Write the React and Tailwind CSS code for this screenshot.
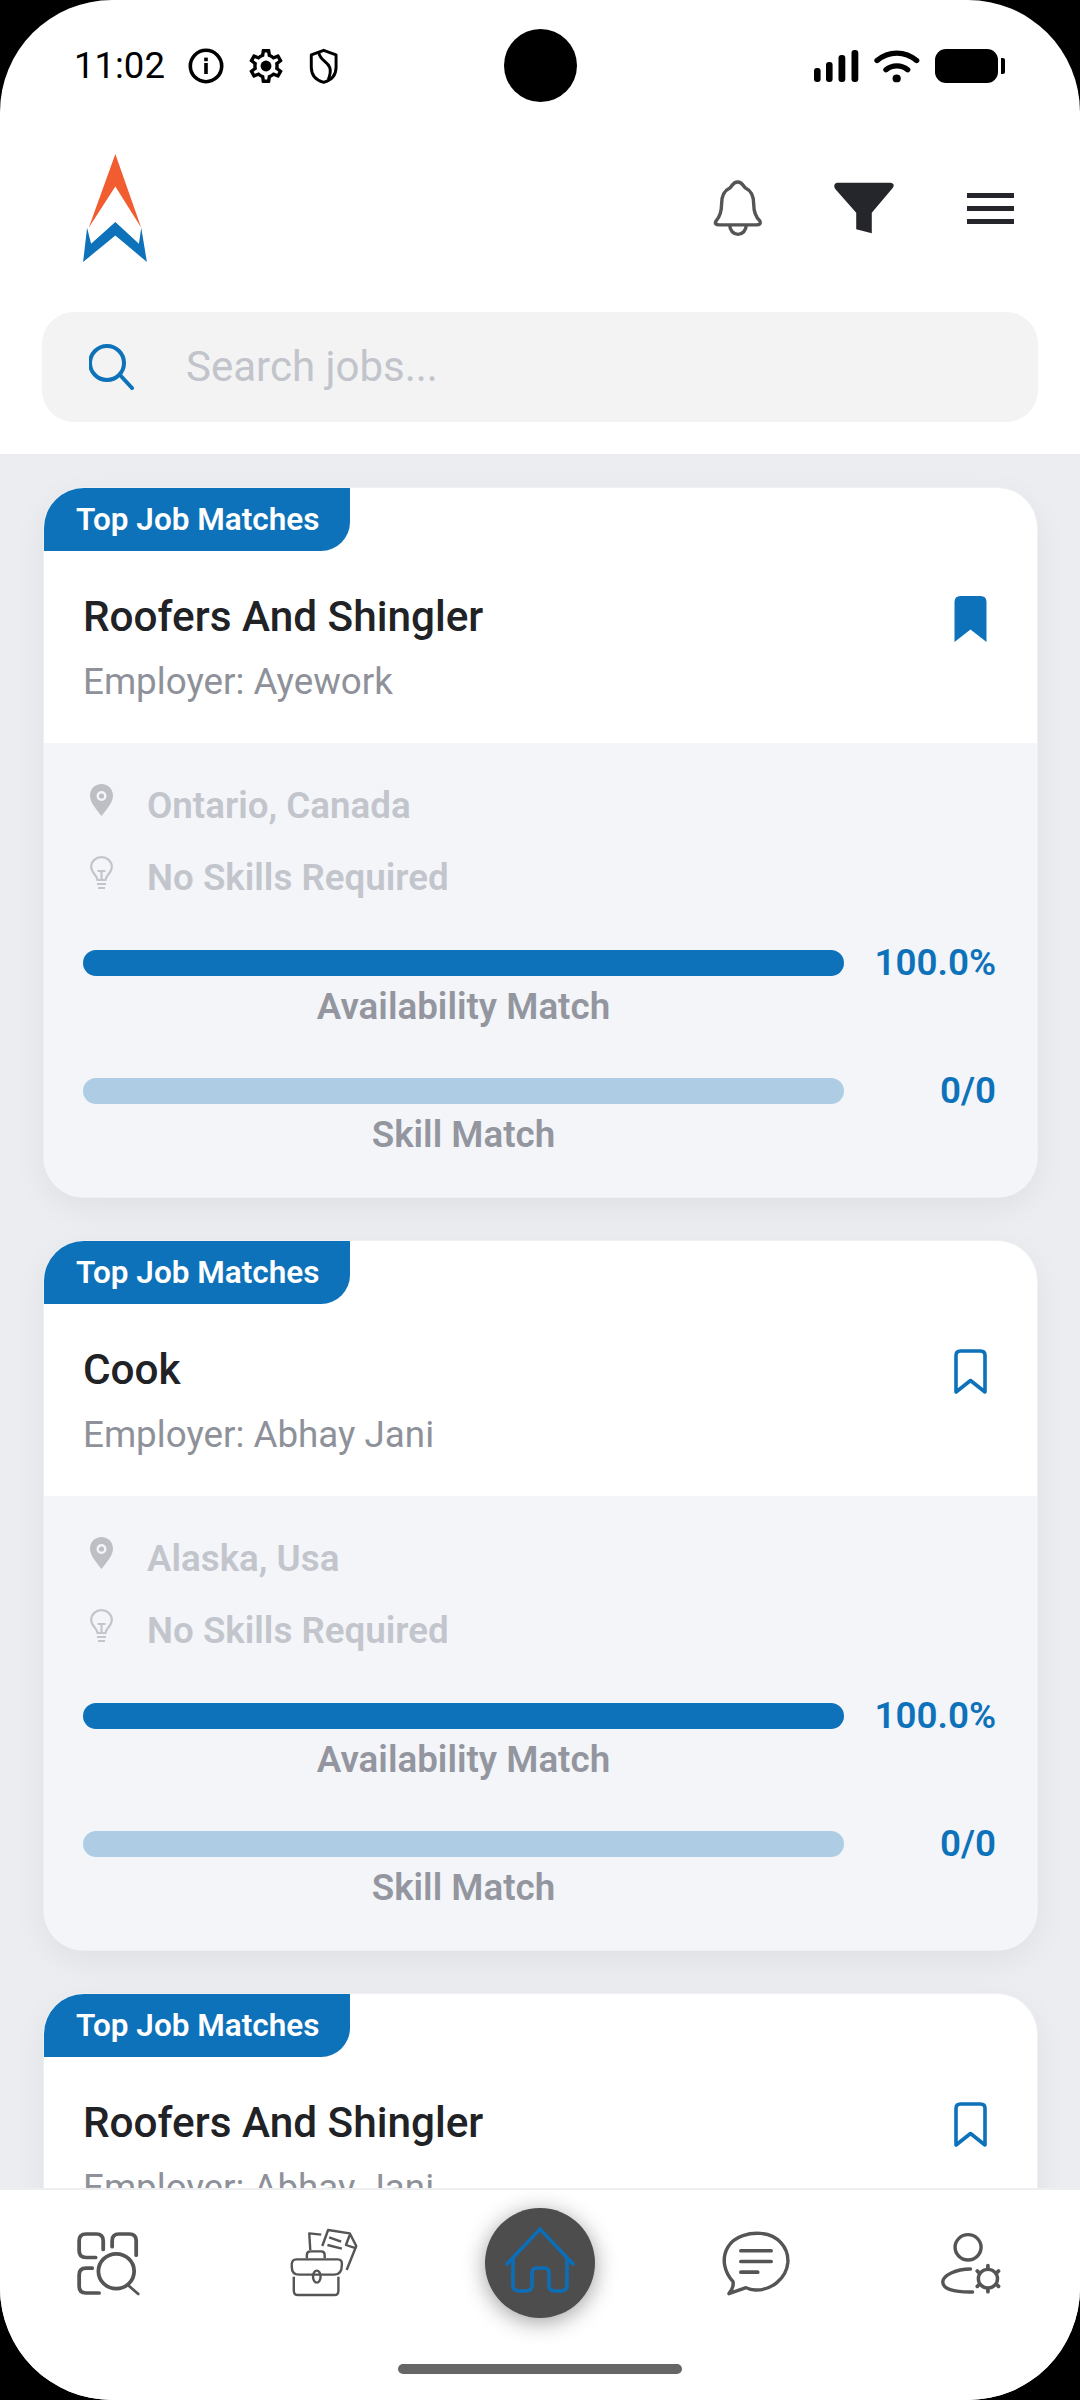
import React from "react";

const jobs = [
  { title: "Roofers And Shingler", employer: "Ayework", place: "Ontario, Canada", saved: true },
  { title: "Cook", employer: "Abhay Jani", place: "Alaska, Usa", saved: false },
  { title: "Roofers And Shingler", employer: "Abhay Jani", place: "Alaska, Usa", saved: false },
];

const gearPath =
  "M19.43 12.98c.04-.32.07-.64.07-.98 0-.34-.03-.66-.07-.98l2.11-1.65c.19-.15.24-.42.12-.64l-2-3.46c-.09-.16-.26-.25-.44-.25-.06 0-.12.01-.17.03l-2.49 1c-.52-.4-1.08-.73-1.69-.98l-.38-2.65C14.46 2.18 14.25 2 14 2h-4c-.25 0-.46.18-.49.42l-.38 2.65c-.61.25-1.17.59-1.69.98l-2.49-1c-.06-.02-.12-.03-.18-.03-.17 0-.34.09-.43.25l-2 3.46c-.13.22-.07.49.12.64l2.11 1.65c-.04.32-.07.65-.07.98 0 .33.03.66.07.98l-2.11 1.65c-.19.15-.24.42-.12.64l2 3.46c.09.16.26.25.44.25.06 0 .12-.01.17-.03l2.49-1c.52.4 1.08.73 1.69.98l.38 2.65c.03.24.24.42.49.42h4c.25 0 .46-.18.49-.42l.38-2.65c.61-.25 1.17-.59 1.69-.98l2.49 1c.06.02.12.03.18.03.17 0 .34-.09.43-.25l2-3.46c.12-.22.07-.49-.12-.64l-2.11-1.65zm-1.98-1.71c.04.31.05.52.05.73 0 .21-.02.43-.05.73l-.14 1.13.89.7 1.08.84-.7 1.21-1.27-.51-1.04-.42-.9.68c-.43.32-.84.56-1.25.73l-1.06.43-.16 1.13-.2 1.35h-1.4l-.19-1.35-.16-1.13-1.06-.43c-.43-.18-.83-.41-1.23-.71l-.91-.7-1.06.43-1.27.51-.7-1.21 1.08-.84.89-.7-.14-1.13c-.03-.31-.05-.54-.05-.74s.02-.43.05-.73l.14-1.13-.89-.7-1.08-.84.7-1.21 1.27.51 1.04.42.9-.68c.43-.32.84-.56 1.25-.73l1.06-.43.16-1.13.2-1.35h1.39l.19 1.35.16 1.13 1.06.43c.43.18.83.41 1.23.71l.91.7 1.06-.43 1.27-.51.7 1.21-1.07.85-.89.7.14 1.13z";

function StatusBar() {
  return (
    <div className="flex h-[132px] shrink-0 items-center pl-[74px] pr-[75px]">
      <span className="text-[36.5px] leading-[42px] text-black">11:02</span>
      {/* info */}
      <svg className="ml-[23px]" width="36" height="36" viewBox="0 0 36 36" fill="none">
        <circle cx="18" cy="18" r="15.7" stroke="#000" strokeWidth="3.6" />
        <rect x="16.2" y="15" width="3.6" height="11" fill="#000" />
        <rect x="16.2" y="9.6" width="3.6" height="3.6" fill="#000" />
      </svg>
      {/* settings */}
      <svg className="ml-[25px]" width="34" height="34" viewBox="2 2 20 20" fill="#000">
        <path d={gearPath} />
        <circle cx="12" cy="12" r="3.2" />
      </svg>
      {/* protection shield */}
      <svg className="ml-[26px]" width="30" height="36" viewBox="893 146 92 110" fill="none" stroke="#000" strokeWidth="9" preserveAspectRatio="none">
        <path d="M938 153 L976 167 V205 C976 230 960 245 938 251 C916 245 900 230 900 205 V167 Z" strokeLinejoin="round" />
        <path d="M923 160 C928 195 975 185 952 243" />
      </svg>

      {/* signal */}
      <svg className="ml-auto" width="45" height="33" viewBox="0 0 45 33" fill="#000">
        <rect x="0" y="18" width="6.6" height="14" rx="3" />
        <rect x="12" y="12" width="6.6" height="20" rx="3" />
        <rect x="24.5" y="5" width="6.8" height="27" rx="3" />
        <rect x="37.5" y="0" width="6.8" height="32" rx="3" />
      </svg>
      {/* wifi */}
      <svg className="ml-[15px]" width="46" height="33" viewBox="972 148 134 100" fill="none" stroke="#000" strokeWidth="16" strokeLinecap="round" preserveAspectRatio="none">
        <path d="M981 180 C1015 150 1062 150 1096 180" />
        <path d="M1007 208 C1025 192 1052 192 1070 208" />
        <circle cx="1038" cy="234" r="12" fill="#000" stroke="none" />
      </svg>
      {/* battery */}
      <div className="ml-[15px] h-[34px] w-[63px] rounded-[11px] bg-black" />
      <div className="ml-[3px] h-[16px] w-[4px] rounded-r-[2px] bg-black" />
    </div>
  );
}

function Header() {
  return (
    <div className="flex h-[152px] shrink-0 items-center pl-[82px] pr-[66px]">
      <svg width="66" height="108" viewBox="238 460 192 325">
        <path d="M335 460 L413 682 L335 558 L255 682 Z" fill="#f15d31" />
        <path d="M238 785 L250 682 L262 730 L335 665 L406 730 L413 682 L430 785 L335 705 Z" fill="#0d72b9" />
      </svg>
      {/* notifications */}
      <svg className="ml-auto" width="53" height="61" viewBox="500 532 155 182" fill="none" stroke="#555" strokeWidth="10" preserveAspectRatio="none">
        <path d="M575 544 C590 544 590 556 598 562 C615 570 622 585 622 610 C622 635 628 648 640 660 Q645 672 630 672 H522 Q505 672 512 660 C522 648 528 635 528 610 C528 585 535 570 552 562 C560 556 560 544 575 544 Z" />
        <path d="M552 674 A24 26 0 0 0 600 674" />
      </svg>
      {/* filter */}
      <svg className="ml-[67px]" width="64" height="54" viewBox="850 540 185 162" fill="#25262b" preserveAspectRatio="none">
        <path d="M864 545 H1020 Q1033 548 1026 560 L965 635 V697 L920 685 V635 L860 565 Q851 550 864 545 Z" />
      </svg>
      {/* menu */}
      <div className="ml-[71px] flex w-[47px] flex-col gap-[8px]">
        <div className="h-[5px] bg-[#25262b]" />
        <div className="h-[5px] bg-[#25262b]" />
        <div className="h-[5px] bg-[#25262b]" />
      </div>
    </div>
  );
}

function SearchBar() {
  return (
    <div className="flex h-[110px] shrink-0 items-center rounded-[32px] bg-[#f3f3f3] pl-[47px]">
      <svg width="46" height="46" viewBox="0 0 46 46" fill="none" stroke="#0d72b9" strokeWidth="4" strokeLinecap="round">
        <circle cx="18" cy="19" r="17" />
        <path d="M31 31 L43 44" />
      </svg>
      <span className="ml-[51px] text-[42px] leading-[46px] text-[#c1c4cb]">Search jobs...</span>
    </div>
  );
}

function Bookmark({ filled }) {
  return (
    <svg className="mt-[4px] shrink-0" width="33" height="46" viewBox="0 0 33 46">
      {filled ? (
        <path d="M0.5 6 Q0.5 0 6.5 0 H26.5 Q32.5 0 32.5 6 V46 L16.5 33.5 L0.5 46 Z" fill="#0d72b9" />
      ) : (
        <path d="M2 6.5 Q2 2 6.5 2 H26.5 Q31 2 31 6.5 V43 L16.5 31.5 L2 43 Z" fill="none" stroke="#0d72b9" strokeWidth="3.6" strokeLinejoin="round" />
      )}
    </svg>
  );
}

function MatchBar({ light, value, label }) {
  return (
    <div>
      <div className="flex items-center">
        <div className={`h-[26px] w-[761px] rounded-[13px] ${light ? "bg-[#aecde5]" : "bg-[#0d72b9]"}`} />
        <span className="ml-auto text-[36.75px] font-semibold leading-[26px] text-[#0d72b9]">{value}</span>
      </div>
      <div className="mt-[10px] w-[761px] text-center text-[36.75px] font-semibold leading-[42px] text-[#94969f]">{label}</div>
    </div>
  );
}

function JobCard({ job }) {
  return (
    <div className="shrink-0 overflow-hidden rounded-[40px] bg-white shadow-[0_0_0_1px_#eef0f3,0_10px_34px_rgba(0,0,0,0.06)]">
      <div className="h-[63px] w-[306px] rounded-br-[29px] bg-[#0d72b9] pl-[32px] text-[31.5px] font-semibold leading-[64px] text-white">
        Top Job Matches
      </div>
      <div className="flex items-start justify-between pb-[40px] pl-[39px] pr-[50px] pt-[41px]">
        <div>
          <div className="text-[42.3px] font-medium leading-[50px] text-[#212226]">{job.title}</div>
          <div className="mt-[19px] text-[36.75px] leading-[42px] text-[#8e9199]">Employer: {job.employer}</div>
        </div>
        <Bookmark filled={job.saved} />
      </div>
      <div className="bg-[#f3f5f9] pb-[41px] pl-[39px] pr-[41px] pt-[41px]">
        <div className="flex items-start">
          <svg className="ml-[7px]" width="23" height="32" viewBox="0 0 23 32">
            <path fillRule="evenodd" d="M11.5 0 C18 0 23 5 23 11.5 C23 19 16 26 11.5 32 C7 26 0 19 0 11.5 C0 5 5 0 11.5 0 Z M11.5 7 A5 5 0 1 0 11.5 17 A5 5 0 1 0 11.5 7 Z" fill="#bdbfc4" />
            <circle cx="11.5" cy="12" r="2.6" fill="#bdbfc4" />
          </svg>
          <span className="ml-[34px] pt-[1px] text-[36.75px] font-semibold leading-[42px] text-[#c3c5cc]">{job.place}</span>
        </div>
        <div className="mt-[29px] flex items-start">
          <svg className="ml-[7px]" width="23" height="34" viewBox="0 0 23 34" fill="none" stroke="#c3c5cc" strokeWidth="2.2">
            <path d="M7.5 24 C7 19 1.2 17 1.2 11 C1.2 5 6 1.2 11.5 1.2 C17 1.2 21.8 5 21.8 11 C21.8 17 16 19 15.5 24 Z" />
            <path d="M11.5 24 V15 M7.5 15 H15.5 M7 28 H16 M8 32 H15" />
          </svg>
          <span className="ml-[34px] pt-[1px] text-[36.75px] font-semibold leading-[42px] text-[#c3c5cc]">No Skills Required</span>
        </div>
        <div className="mt-[51px]">
          <MatchBar value="100.0%" label="Availability Match" />
        </div>
        <div className="mt-[50px]">
          <MatchBar light value="0/0" label="Skill Match" />
        </div>
      </div>
    </div>
  );
}

function BottomNav() {
  return (
    <div className="h-[212px] shrink-0 border-t-2 border-[#eceef0] bg-white pt-[18px]">
      <div className="flex h-[110px] items-center pl-[74px]">
        {/* job search */}
        <svg width="67" height="67" viewBox="215 210 195 200" fill="none" stroke="#555" strokeWidth="11" strokeLinecap="round" preserveAspectRatio="none">
          <path d="M278 292 H250 Q230 292 230 272 V242 Q230 222 250 222 H280 Q300 222 300 242 V268" />
          <path d="M326 260 V242 Q326 222 346 222 H376 Q396 222 396 242 V285" />
          <path d="M268 324 H250 Q230 324 230 344 V378 Q230 398 250 398 H288" />
          <ellipse cx="338" cy="333" rx="52" ry="52" />
          <path d="M376 378 L402 401" strokeWidth="8" />
        </svg>
        {/* applications */}
        <svg className="ml-[148px]" width="70" height="70" viewBox="838 204 204 210" fill="none" stroke="#555" strokeWidth="7" strokeLinejoin="round" preserveAspectRatio="none">
          <path d="M860 298 H980 Q994 298 992 315 Q992 344 970 344 H868 Q846 344 846 320 Q844 298 860 298 Z" />
          <path d="M852 350 V392 Q852 405 865 405 H970 Q982 405 982 392 V350" />
          <ellipse cx="919" cy="350" rx="11" ry="18" />
          <path d="M890 295 V285 Q890 274 900 274 H932 Q942 274 942 285 V295" />
          <path d="M900 270 L897 220 L932 224" />
          <path d="M935 258 L952 210 L1015 220 L1034 258 L1006 330" />
          <path d="M1015 225 L1004 255 L1034 265" />
          <path d="M955 232 L990 245 M950 255 L992 266" />
        </svg>
        {/* home */}
        <div className="ml-[126px] flex h-[110px] w-[110px] items-center justify-center rounded-full bg-[#4d4d4d] shadow-[0_4px_22px_rgba(0,0,0,0.38)]">
          <svg width="80" height="75" viewBox="500 2225 80 75" fill="none" stroke="#0d6eb8" strokeWidth="3.6" strokeLinecap="round">
            <path d="M507 2263 L540 2228 L573 2263" />
            <path d="M513 2258 V2284 Q513 2290 519 2290 H526 Q532 2290 532 2284 V2272 Q532 2267 537 2267 H544 Q549 2267 549 2272 V2284 Q549 2290 555 2290 H561 Q567 2290 567 2284 V2258" />
          </svg>
        </div>
        {/* messages */}
        <svg className="ml-[125px]" width="72" height="67" viewBox="522 214 210 200" fill="none" stroke="#555" strokeWidth="10" strokeLinecap="round" strokeLinejoin="round" preserveAspectRatio="none">
          <path d="M560 368 C535 340 525 300 545 265 C565 230 610 222 640 224 C690 228 722 265 720 310 C716 360 670 395 625 393 C615 393 605 390 598 386 L548 404 C558 392 562 380 560 368 Z" />
          <path d="M583 276 H671 M583 308 H671 M583 340 H632" strokeWidth="11" />
        </svg>
        {/* profile settings */}
        <svg className="ml-[147px]" width="65" height="64" viewBox="1160 212 190 192" fill="none" stroke="#555" strokeWidth="10" strokeLinecap="round" preserveAspectRatio="none">
          <circle cx="1245" cy="261" r="38" />
          <path d="M1252 326 C1210 326 1171 345 1171 365 C1171 385 1200 396 1258 395" />
          <circle cx="1303" cy="355" r="28" />
          <path d="M1303 316 V322 M1303 388 V394 M1272 332 L1276 336 M1334 332 L1330 336 M1272 378 L1276 374 M1334 378 L1330 374" strokeWidth="11" />
        </svg>
      </div>
      {/* gesture bar */}
      <div className="mx-auto mt-[46px] h-[10px] w-[284px] rounded-[5px] bg-[#666666]" />
    </div>
  );
}

export default function App() {
  return (
    <div className="h-[2400px] w-[1080px] bg-black font-[Roboto,sans-serif]">
      <div className="relative flex h-full flex-col overflow-hidden rounded-[112px] bg-white">
        {/* camera cut-out */}
        <div className="absolute left-[504px] top-[29px] h-[73px] w-[73px] rounded-full bg-black" />
        <StatusBar />
        <Header />
        <div className="shrink-0 px-[42px] pb-[32px] pt-[28px]">
          <SearchBar />
        </div>
        <div className="flex min-h-0 flex-1 flex-col gap-[44px] overflow-hidden bg-[#ecedf0] pl-[44px] pr-[43px] pt-[34px]">
          {jobs.map((job, i) => (
            <JobCard key={i} job={job} />
          ))}
        </div>
        <BottomNav />
      </div>
    </div>
  );
}
